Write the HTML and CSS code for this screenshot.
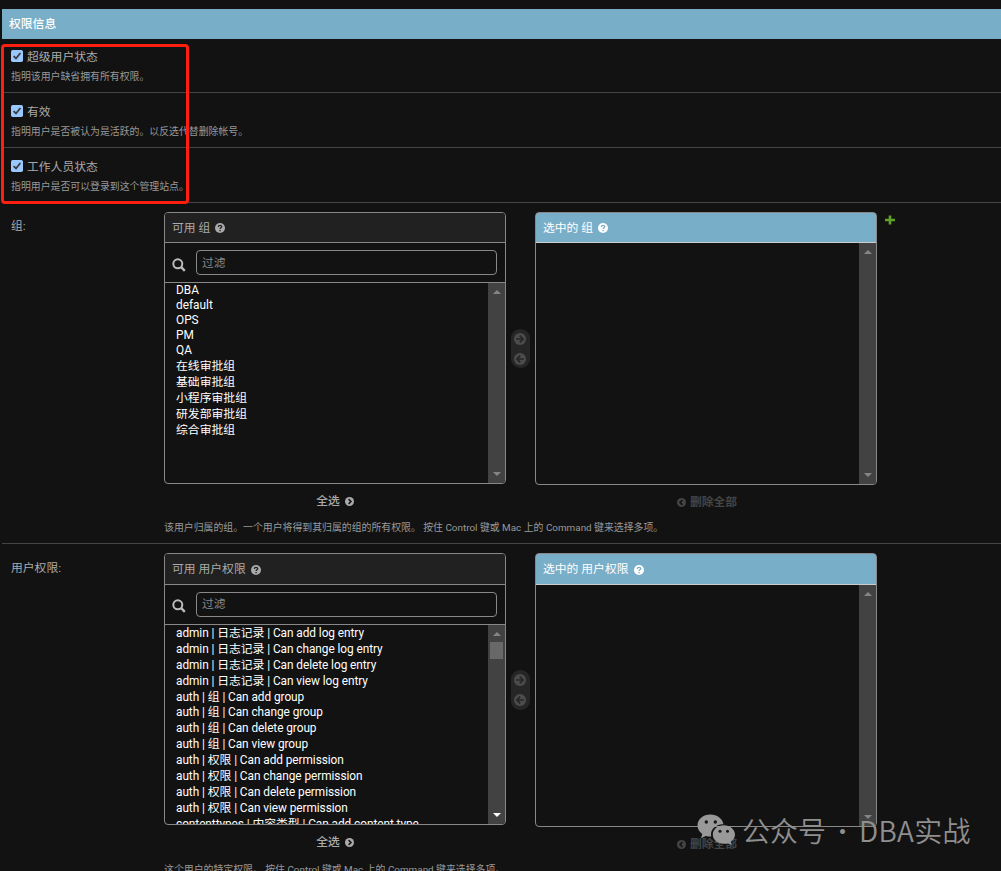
FILE: index.html
```
<!DOCTYPE html>
<html lang="zh-hans">
	<head>
		<meta charset="utf-8">
		<title>用户权限</title>
		<link rel="stylesheet" href="styles.css">
	</head>
	<body>
		<svg class="sprite" width="0" height="0">
			<symbol id="help" viewBox="0 0 10 10">
				<circle cx="5" cy="5" r="5" fill="currentColor" />
				<path class="cut" d="M3.3 3.9C3.4 1.8 6.8 1.9 6.7 3.8C6.6 4.8 5.1 4.8 5.1 6M5.1 7V8.2" stroke-width="1.4" />
			</symbol>
			<symbol id="search" viewBox="0 0 14 14">
				<circle cx="5.8" cy="5.8" r="4.5" fill="none" stroke="currentColor" stroke-width="2" />
				<path d="M9.2 9.2L12.8 12.8" stroke="currentColor" stroke-width="2.4" />
			</symbol>
			<symbol id="check" viewBox="0 0 12 12">
				<rect width="12" height="12" rx="1.8" fill="#99c8ff" />
				<path d="M2.6 6.2L5 8.5L9.4 3" fill="none" stroke="#3b3b3b" stroke-width="1.8" />
			</symbol>
			<symbol id="arrow" viewBox="0 0 12 12">
				<circle cx="6" cy="6" r="6" fill="currentColor" />
				<path class="cut" d="M2.2 6H8.8M5.8 2.7L9.1 6L5.8 9.3" stroke-width="1.7" />
			</symbol>
			<symbol id="chevron" viewBox="0 0 9 9">
				<circle cx="4.5" cy="4.5" r="4.5" fill="currentColor" />
				<path class="cut" d="M3.6 2.1L6 4.5L3.6 6.9" stroke-width="1.5" />
			</symbol>
		</svg>

		<fieldset class="module">
			<h2>权限信息</h2>
			<div class="form-row checkbox-row first">
				<label><svg class="check"><use href="#check" /></svg>超级用户状态</label>
				<div class="help">指明该用户缺省拥有所有权限。</div>
			</div>
			<div class="form-row checkbox-row">
				<label><svg class="check"><use href="#check" /></svg>有效</label>
				<div class="help">指明用户是否被认为是活跃的。以反选代替删除帐号。</div>
			</div>
			<div class="form-row checkbox-row">
				<label><svg class="check"><use href="#check" /></svg>工作人员状态</label>
				<div class="help">指明用户是否可以登录到这个管理站点。</div>
			</div>

			<div class="form-row selector-row">
				<div class="row-label">组:</div>
				<div class="field">
					<div class="selector">
						<div class="column">
							<div class="box available">
								<h3>可用 组 <svg class="icon-help"><use href="#help" /></svg></h3>
								<div class="filter">
									<svg class="icon-search"><use href="#search" /></svg>
									<input type="text" placeholder="过滤">
								</div>
								<div class="list">
									<ul class="groups">
										<li>DBA</li>
										<li>default</li>
										<li>OPS</li>
										<li>PM</li>
										<li>QA</li>
										<li class="cjk">在线审批组</li>
										<li class="cjk">基础审批组</li>
										<li class="cjk">小程序审批组</li>
										<li class="cjk">研发部审批组</li>
										<li class="cjk">综合审批组</li>
									</ul>
									<div class="scrollbar"><i class="up"></i><i class="down"></i></div>
								</div>
							</div>
							<a class="choose-all">全选 <svg class="icon-chevron"><use href="#chevron" /></svg></a>
						</div>
						<div class="chooser">
							<svg><use href="#arrow" /></svg>
							<svg class="flip"><use href="#arrow" /></svg>
						</div>
						<div class="column">
							<div class="box chosen">
								<h3>选中的 组 <svg class="icon-help"><use href="#help" /></svg></h3>
								<div class="list">
									<ul></ul>
									<div class="scrollbar"><i class="up"></i><i class="down"></i></div>
								</div>
							</div>
							<a class="clear-all"><svg class="icon-chevron flip"><use href="#chevron" /></svg> 删除全部</a>
						</div>
						<svg class="add" viewBox="0 0 10 10"><path d="M5 0.5V9.5M0 5H10" stroke="#5fa225" stroke-width="2.6" /></svg>
					</div>
					<div class="help">该用户归属的组。一个用户将得到其归属的组的所有权限。 按住 Control 键或 Mac 上的 Command 键来选择多项。</div>
				</div>
			</div>

			<div class="form-row selector-row permissions">
				<div class="row-label">用户权限:</div>
				<div class="field">
					<div class="selector">
						<div class="column">
							<div class="box available">
								<h3>可用 用户权限 <svg class="icon-help"><use href="#help" /></svg></h3>
								<div class="filter">
									<svg class="icon-search"><use href="#search" /></svg>
									<input type="text" placeholder="过滤">
								</div>
								<div class="list">
									<ul>
										<li>admin | 日志记录 | Can add log entry</li>
										<li>admin | 日志记录 | Can change log entry</li>
										<li>admin | 日志记录 | Can delete log entry</li>
										<li>admin | 日志记录 | Can view log entry</li>
										<li>auth | 组 | Can add group</li>
										<li>auth | 组 | Can change group</li>
										<li>auth | 组 | Can delete group</li>
										<li>auth | 组 | Can view group</li>
										<li>auth | 权限 | Can add permission</li>
										<li>auth | 权限 | Can change permission</li>
										<li>auth | 权限 | Can delete permission</li>
										<li>auth | 权限 | Can view permission</li>
										<li>contenttypes | 内容类型 | Can add content type</li>
									</ul>
									<div class="scrollbar scrollable"><i class="up"></i><b class="thumb"></b><i class="down"></i></div>
								</div>
							</div>
							<a class="choose-all">全选 <svg class="icon-chevron"><use href="#chevron" /></svg></a>
						</div>
						<div class="chooser">
							<svg><use href="#arrow" /></svg>
							<svg class="flip"><use href="#arrow" /></svg>
						</div>
						<div class="column">
							<div class="box chosen">
								<h3>选中的 用户权限 <svg class="icon-help"><use href="#help" /></svg></h3>
								<div class="list">
									<ul></ul>
									<div class="scrollbar"><i class="up"></i><i class="down"></i></div>
								</div>
							</div>
							<a class="clear-all"><svg class="icon-chevron flip"><use href="#chevron" /></svg> 删除全部</a>
						</div>
					</div>
					<div class="help">这个用户的特定权限。 按住 Control 键或 Mac 上的 Command 键来选择多项。</div>
				</div>
			</div>
		</fieldset>

		<div class="highlight"></div>

		<div class="watermark">
			<svg width="39" height="32" viewBox="0 0 39 32">
				<path fill="#999" d="M13.5 0.5C6 0.5 0.5 5.4 0.5 11.5C0.5 15 2.4 18 5.3 20L4 24.3L8.8 21.9C10.5 22.4 12.2 22.6 14.2 22.5C12.7 15.8 18.5 10 26.5 10.2C25.5 4.5 20 0.5 13.5 0.5Z" />
				<path fill="#999" d="M26.8 11.2C20.5 11.2 15.8 15.5 15.8 20.5C15.8 26 20.8 29.8 26.8 29.8C28.2 29.8 29.6 29.6 31 29.2L34.7 31.3L33.7 27.8C36.5 25.9 38 23.4 38 20.5C38 15.5 33.1 11.2 26.8 11.2Z" />
				<g fill="#151515">
					<circle cx="9.3" cy="8" r="1.7" />
					<circle cx="18.3" cy="8" r="1.7" />
					<circle cx="23" cy="17.3" r="1.5" />
					<circle cx="30.5" cy="17.3" r="1.5" />
				</g>
			</svg>
			<span>公众号</span><span class="dot">·</span><span class="name">DBA实战</span>
		</div>
	</body>
</html>
```
FILE: styles.css
```
* {
	box-sizing: border-box;
}
body {
	margin: 0;
	padding: 9px 0 0 2px;
	height: 871px;
	overflow: hidden;
	background: #121212;
	color: #aaa;
	font-family: Roboto, "Noto Sans CJK SC", sans-serif;
	font-size: 11.8px;
	line-height: 16px;
}
h2, h3, ul {
	margin: 0;
	padding: 0;
	font-weight: 400;
}
svg {
	display: block;
	flex: none;
}
.sprite {
	position: absolute;
}
.cut {
	fill: none;
	stroke: var(--cut, #121212);
}
.flip {
	transform: scaleX(-1);
}

.module {
	margin: 0;
	padding: 0;
	border: 0;
	min-width: 0;
}
.module h2 {
	height: 30px;
	padding-left: 7px;
	background: #79aec8;
	color: #fff;
	font-size: 11.8px;
	font-weight: 500;
	line-height: 30px;
}
.form-row {
	border-bottom: 1px solid #444;
	padding-left: 9px;
}
.checkbox-row {
	height: 55px;
	padding-top: 11px;
}
.checkbox-row.first {
	height: 54px;
	padding-top: 10px;
}
.checkbox-row label {
	display: flex;
	gap: 4px;
}
.check {
	width: 12px;
	height: 12px;
	margin-top: 1px;
}
.help {
	color: #999;
	font-size: 9.88px;
	line-height: 14px;
	white-space: nowrap;
}
.checkbox-row .help {
	margin-top: 5px;
}

.selector-row {
	display: flex;
	height: 341px;
	padding-top: 9px;
}
.row-label {
	width: 153px;
	padding-top: 6px;
}
.selector {
	display: flex;
	height: 302px;
}
.column {
	width: 342px;
}
.box {
	display: flex;
	flex-direction: column;
	height: 272px;
	border: 1px solid #888;
	border-radius: 4px;
	overflow: hidden;
}
.box.chosen {
	height: 273px;
}
.box h3 {
	display: flex;
	align-items: center;
	gap: 5px;
	height: 30px;
	padding-left: 7px;
	border-bottom: 1px solid #888;
	background: #212121;
	font-size: 11.8px;
	--cut: #212121;
}
.box.chosen h3 {
	height: 31px;
	margin: -1px -1px 0;
	padding-left: 7px;
	border: 1px solid #ccc;
	border-radius: 4px 4px 0 0;
	background: #79aec8;
	color: #fff;
	--cut: #79aec8;
}
.icon-help {
	width: 10px;
	height: 10px;
	margin-top: 1px;
}
.filter {
	display: flex;
	height: 40px;
	padding: 7px 8px 0 7px;
	border-bottom: 1px solid #888;
}
.icon-search {
	width: 14px;
	height: 14px;
	margin: 8px 10px 0 0;
	color: #bbb;
}
.filter input {
	flex: 1;
	height: 25px;
	padding: 0 5px;
	border: 1px solid #888;
	border-radius: 4px;
	background: #121212;
	color: #eee;
	font: inherit;
}
.filter input::placeholder {
	color: #888;
}
.list {
	flex: 1;
	display: flex;
	min-height: 0;
}
.list ul {
	flex: 1;
	padding-left: 11px;
	list-style: none;
	overflow: hidden;
	color: #fff;
	font-size: 11.85px;
}
.list li {
	height: 15.9px;
	line-height: 15.9px;
	white-space: nowrap;
}
.list .groups li {
	height: 15px;
	line-height: 15px;
}
.list .groups li.cjk {
	height: 16px;
	line-height: 16px;
}
.scrollbar {
	display: flex;
	flex-direction: column;
	align-items: center;
	width: 17px;
	padding: 7px 0;
	background: #424242;
}
.up, .down {
	border: 4px solid transparent;
	border-top-width: 0;
	border-bottom: 4px solid #858585;
}
.down {
	margin-top: auto;
	border-top: 4px solid #858585;
	border-bottom-width: 0;
}
.scrollable .down {
	border-top-color: #fff;
}
.thumb {
	width: 13px;
	height: 17px;
	margin-top: 6px;
	background: #686868;
}
.choose-all, .clear-all {
	display: flex;
	justify-content: center;
	align-items: center;
	gap: 5px;
	margin-top: 9px;
	font-weight: 500;
}
.clear-all {
	gap: 4px;
	padding-left: 2px;
	color: #444;
	font-weight: 700;
}
.icon-chevron {
	width: 9px;
	height: 9px;
	margin-top: 1px;
}
.chooser {
	display: flex;
	flex-direction: column;
	align-items: center;
	justify-content: space-between;
	width: 19px;
	height: 39px;
	margin: 117px 5px 0;
	padding: 4px 1px 3px 0;
	border-radius: 9px;
	background: #262626;
	color: #4c4c4c;
	--cut: #262626;
}
.chooser svg {
	width: 12px;
	height: 12px;
}
.add {
	width: 10px;
	height: 10px;
	margin: 3px 0 0 8px;
}
.field > .help {
	margin-top: 7px;
}

.permissions {
	border-bottom: 0;
}
.permissions .row-label {
	padding-top: 7px;
}
.permissions .box h3 {
	height: 31px;
}
.permissions .box.chosen h3 {
	height: 32px;
}
.permissions .box.chosen {
	height: 274px;
}
.permissions .icon-search {
	margin-top: 7px;
}
.permissions .filter input {
	padding-bottom: 2px;
}
.permissions .list ul {
	padding-top: 1px;
	letter-spacing: -0.06px;
}
.permissions .chooser {
	height: 40px;
	padding-bottom: 4px;
}
.permissions .field > .help {
	margin-top: 8px;
}

/* box around the status checkboxes */
.highlight {
	position: absolute;
	left: 1px;
	top: 44px;
	width: 188px;
	height: 160px;
	border: 3px solid #ff1f10;
	border-radius: 4px;
}
.watermark {
	position: absolute;
	left: 697px;
	top: 814px;
	display: flex;
	color: #8f8f8f;
	font-family: "Noto Sans CJK SC", sans-serif;
	font-size: 28px;
	font-weight: 350;
	line-height: 32px;
	white-space: nowrap;
}
.watermark svg {
	margin-right: 6px;
}
.watermark .dot {
	width: 33px;
	font-size: 24px;
	text-align: center;
}
.watermark .name {
	letter-spacing: 0.3px;
}
```
